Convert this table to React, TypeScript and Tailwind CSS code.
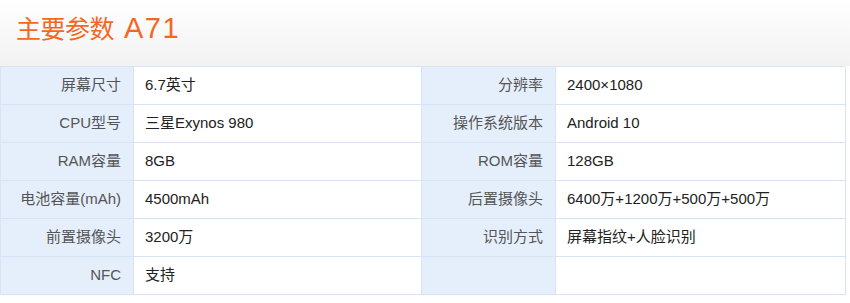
import React from "react";

type Row = [string, string, string, string];

const rows: Row[] = [
  ["屏幕尺寸", "6.7英寸", "分辨率", "2400×1080"],
  ["CPU型号", "三星Exynos 980", "操作系统版本", "Android 10"],
  ["RAM容量", "8GB", "ROM容量", "128GB"],
  ["电池容量(mAh)", "4500mAh", "后置摄像头", "6400万+1200万+500万+500万"],
  ["前置摄像头", "3200万", "识别方式", "屏幕指纹+人脸识别"],
  ["NFC", "支持", "", ""],
];

const Label = ({ text }: { text: string }) => (
  <div className="h-[38px] flex items-center justify-end pr-[12px] bg-[#e5effc] border-r border-b border-[#d6e4f5] text-[#555] text-[15px]">
    {text}
  </div>
);

const Value = ({ text }: { text: string }) => (
  <div className="h-[38px] flex items-center pl-[11px] bg-white border-r border-b border-[#d6e4f5] text-[#222] text-[15px]">
    {text}
  </div>
);

export default function App() {
  return (
    <div
      className="w-[850px] h-[303px] bg-white"
      style={{ fontFamily: '"Liberation Sans", "Noto Sans CJK SC", sans-serif' }}
    >
      <div className="h-[66px] bg-gradient-to-b from-white to-[#f2f2f2] pl-[16px] pt-[10px] flex items-start">
        <h2 className="text-[25px] leading-[36px] text-[#f4671f] font-normal tracking-[-0.5px]">
          主要参数
          <span className="ml-[10px] text-[29px] tracking-[1.5px]">A71</span>
        </h2>
      </div>
      <div className="w-[845px] grid grid-cols-[133px_288px_134px_290px] border-t border-l border-[#d6e4f5]">
        {rows.map((r, i) => (
          <React.Fragment key={i}>
            <Label text={r[0]} />
            <Value text={r[1]} />
            <Label text={r[2]} />
            <Value text={r[3]} />
          </React.Fragment>
        ))}
      </div>
    </div>
  );
}
